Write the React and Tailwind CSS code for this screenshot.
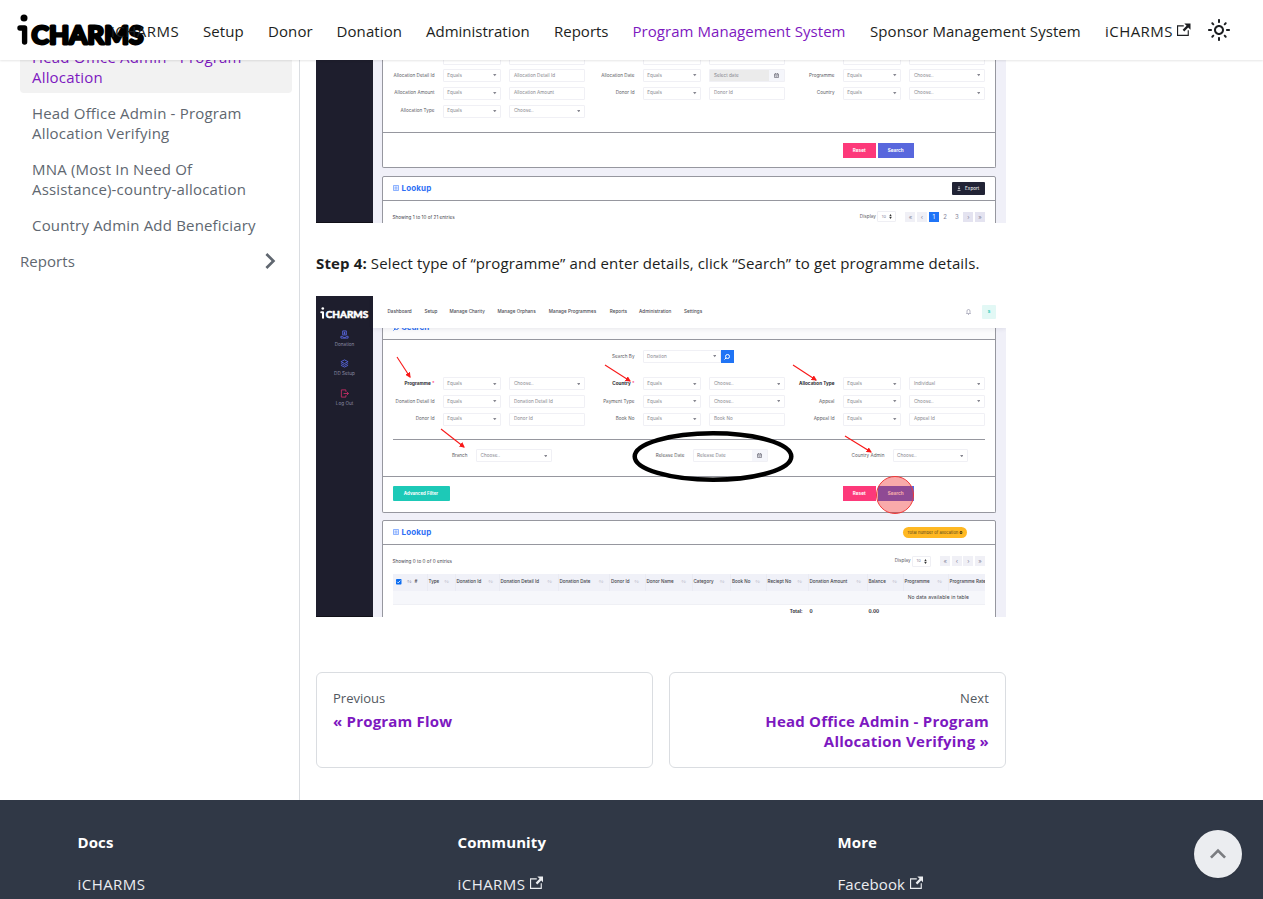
import React from "react";

const EXTERNAL =
  "M21 13v10h-21v-19h12v2h-10v15h17v-8h2zm3-12h-10.988l4.035 4-6.977 7.07 2.828 2.828 6.977-7.07 4.125 4.172v-11z";
const CHEVRON = "M7.41 15.41L12 10.83l4.59 4.58L18 14l-6-6-6 6z";
const SUN =
  "M12,9c1.65,0,3,1.35,3,3s-1.35,3-3,3s-3-1.35-3-3S10.35,9,12,9 M12,7c-2.76,0-5,2.24-5,5s2.24,5,5,5s5-2.24,5-5 S14.76,7,12,7L12,7z M2,13l2,0c0.55,0,1-0.45,1-1s-0.45-1-1-1l-2,0c-0.55,0-1,0.45-1,1S1.45,13,2,13z M20,13l2,0c0.55,0,1-0.45,1-1 s-0.45-1-1-1l-2,0c-0.55,0-1,0.45-1,1S19.45,13,20,13z M11,2v2c0,0.55,0.45,1,1,1s1-0.45,1-1V2c0-0.55-0.45-1-1-1S11,1.45,11,2z M11,20v2c0,0.55,0.45,1,1,1s1-0.45,1-1v-2c0-0.55-0.45-1-1-1C11.45,19,11,19.45,11,20z M5.99,4.58c-0.39-0.39-1.03-0.39-1.41,0 c-0.39,0.39-0.39,1.03,0,1.41l1.06,1.06c0.39,0.39,1.03,0.39,1.41,0s0.39-1.03,0-1.41L5.99,4.58z M18.36,16.95 c-0.39-0.39-1.03-0.39-1.41,0c-0.39,0.39-0.39,1.03,0,1.41l1.06,1.06c0.39,0.39,1.03,0.39,1.41,0c0.39-0.39,0.39-1.03,0-1.41 L18.36,16.95z M19.42,5.99c0.39-0.39,0.39-1.03,0-1.41c-0.39-0.39-1.03-0.39-1.41,0l-1.06,1.06c-0.39,0.39-0.39,1.03,0,1.41 s1.03,0.39,1.41,0L19.42,5.99z M7.05,18.36c0.39-0.39,0.39-1.03,0-1.41c-0.39-0.39-1.03-0.39-1.41,0l-1.06,1.06 c-0.39,0.39-0.39,1.03,0,1.41s1.03,0.39,1.41,0L7.05,18.36z";

function External({ className = "" }) {
  return (
    <svg viewBox="0 0 24 24" className={`h-[13.5px] w-[13.5px] shrink-0 fill-current ${className}`}>
      <path d={EXTERNAL} />
    </svg>
  );
}

function Logo({ className, weight = 1.6 }) {
  return (
    <svg viewBox="0 0 128 32" className={className} fill="currentColor" stroke="currentColor">
      <circle cx="7" cy="3.9" r="3.5" stroke="none" />
      <path d="M3 14H7.6V28" fill="none" strokeWidth="5.4" strokeLinecap="round" strokeLinejoin="round" />
      <text
        x="14.5" y="30" fontFamily="Lato, sans-serif" fontWeight="700" fontSize="25.5"
        strokeWidth={weight} strokeLinejoin="round" textLength="112" lengthAdjust="spacingAndGlyphs"
      >
        CHARMS
      </text>
    </svg>
  );
}

const NAV = [
  ["iCHARMS", "w-[92px] tracking-[0.5px]"],
  ["Setup", "w-[65px] tracking-[0.1px]"],
  ["Donor", "w-[68.5px] tracking-[0.1px]"],
  ["Donation", "w-[89.5px] tracking-[0.1px]"],
  ["Administration", "w-[128px]"],
  ["Reports", "w-[78.5px]"],
  ["Program Management System", "w-[237.5px] tracking-[0.05px]"],
  ["Sponsor Management System", "w-[235px] tracking-[0.07px]"],
];

function Header() {
  return (
    <header className="relative z-10 flex h-[60px] shrink-0 items-center bg-white pl-[17px] shadow-[0_1px_2px_0_rgba(0,0,0,0.1)]">
      <Logo weight={2.8} className="mr-[-46px] h-8 w-32 shrink-0" />
      <nav className="flex items-center pt-[3px] text-[15px] text-[#1c1e21]">
        {NAV.map(([label, width]) => (
          <a
            key={label}
            className={`${width} shrink-0 whitespace-nowrap px-3 ${label.startsWith("Program") ? "text-[#7d18c0]" : ""}`}
          >
            {label}
          </a>
        ))}
        <a className="flex w-[98px] shrink-0 items-center whitespace-nowrap pl-3 tracking-[0.45px]">
          iCHARMS <External className="mb-1 ml-[4.5px]" />
        </a>
      </nav>
      <svg viewBox="0 0 24 24" className="ml-[16px] h-6 w-6 shrink-0 fill-[#1c1e21]">
        <path d={SUN} />
      </svg>
    </header>
  );
}

function Sidebar() {
  return (
    <aside className="flex w-[300px] shrink-0 flex-col gap-1 border-r border-[#dadde1] pl-2 pr-[7px] text-[15px] leading-5 tracking-[0.18px] text-[#606770]">
      <div className="-mt-[19px] ml-3 rounded bg-[#f2f2f2] px-3 py-1.5 text-[#7d18c0]">
        Head Office Admin - Program<br />Allocation
      </div>
      <div className="ml-3 px-3 py-1.5">Head Office Admin - Program<br />Allocation Verifying</div>
      <div className="ml-3 whitespace-nowrap px-3 py-1.5">MNA (Most In Need Of<br />Assistance)-country-allocation</div>
      <div className="ml-3 whitespace-nowrap px-3 py-1.5">Country Admin Add Beneficiary</div>
      <div className="flex h-8 items-center justify-between pl-3 pr-1.5 tracking-[0.05px]">
        Reports
        <svg viewBox="0 0 24 24" className="h-8 w-8 rotate-90 fill-[#606770]"><path d={CHEVRON} /></svg>
      </div>
    </aside>
  );
}

/* ---------- Miniature application screens ---------- */

function Box({ w, text, arrow, date, gray }) {
  return (
    <div className={`${w} flex h-[13px] shrink-0 items-center justify-between rounded-[1px] border border-[#f0f0f5] pl-[3.5px] text-[#85858d] ${gray ? "bg-[#ebebeb]" : "bg-white"}`}>
      <span>{text}</span>
      {arrow && <svg viewBox="0 0 4 3" className="mr-[3.5px] h-[2.5px] w-[3.5px] fill-[#85858f]"><path d="M0 0H4L2 2.8z" /></svg>}
      {date && <Calendar />}
    </div>
  );
}

function Calendar() {
  return (
    <div className="flex h-full w-[15px] items-center justify-center bg-[#f5f6fb]">
      <svg viewBox="0 0 10 10" className="h-[5px] w-[5px]" fill="none" stroke="#70707c" strokeWidth="1.4">
        <path d="M1 2h8v7H1zM1 4h8M3 0v2M7 0v2M3 6.5h4" />
      </svg>
    </div>
  );
}

function Group({ label, req, bold, value, arrow, date }) {
  return (
    <div className="flex w-[200px] shrink-0 items-center gap-[8.3px]">
      <div className={`w-[50px] shrink-0 whitespace-nowrap text-right ${bold ? "font-bold text-[#26262e]" : "text-[#5a5a62]"}`}>
        {label}{req && <span className="text-[#fd397a]"> *</span>}
      </div>
      <Box w="w-[58.4px]" text="Equals" arrow />
      <Box w="w-[75.5px]" text={value} arrow={arrow} date={date} gray={date} />
    </div>
  );
}

function Row({ groups }) {
  return (
    <div className="flex h-[17.7px] items-center pl-[1.5px]">
      {groups.map((g) => <Group key={g.label} {...g} />)}
    </div>
  );
}

const CHOOSE = { value: "Choose..", arrow: true };

const ROWS_A = [
  [{ label: "Allocation Id", value: "Allocation Id" }, { label: "Donation Id", value: "Donation Id" }, { label: "Appeal", value: "" }],
  [{ label: "Allocation Detail Id", value: "Allocation Detail Id" }, { label: "Allocation Date", value: "Select date", date: true }, { label: "Programme", ...CHOOSE }],
  [{ label: "Allocation Amount", value: "Allocation Amount" }, { label: "Donor Id", value: "Donor Id" }, { label: "Country", ...CHOOSE }],
  [{ label: "Allocation Type", ...CHOOSE }],
];

const ROWS_B = [
  [{ label: "Programme", bold: true, req: true, ...CHOOSE }, { label: "Country", bold: true, req: true, ...CHOOSE }, { label: "Allocation Type", bold: true, value: "Individual", arrow: true }],
  [{ label: "Donation Detail Id", value: "Donation Detail Id" }, { label: "Payment Type", ...CHOOSE }, { label: "Appeal", ...CHOOSE }],
  [{ label: "Donor Id", value: "Donor Id" }, { label: "Book No", value: "Book No" }, { label: "Appeal Id", value: "Appeal Id" }],
];

function Buttons() {
  return (
    <div className="flex gap-[1.5px] text-center font-bold leading-[15px] text-white">
      <div className="h-[15px] w-[33.5px] bg-[#fd397a]">Reset</div>
      <div className="h-[15px] w-[36.5px] bg-[#5867dd]">Search</div>
    </div>
  );
}

function LookupTitle() {
  return (
    <div className="flex items-center gap-[3px] pb-px text-[8px] font-bold text-[#2d70f5]">
      <svg viewBox="0 0 12 12" className="h-[6px] w-[6px]" fill="none" stroke="#5d92ff" strokeWidth="1.4">
        <path d="M1 1h10v10H1zM3 4h6M3 6h6M3 8.2h6" />
      </svg>
      <span className="tracking-[0.15px]">Lookup</span>
    </div>
  );
}

function Pager({ active }) {
  const items = active ? ["«", "‹", "1", "2", "3", "›", "»"] : ["«", "‹", "›", "»"];
  return (
    <div className="flex items-center text-[#85859a]">
      <span className="text-[#5a5a62]">Display</span>
      <div className="ml-[1.5px] flex h-[11px] w-[19px] items-center justify-center gap-[3px] rounded-[1px] border border-[#efeff4] text-[4px]">
        10
        <svg viewBox="0 0 4 8" className="h-[5px] w-[3px] fill-[#333]"><path d="M2 0L4 3.4H0zM0 4.6H4L2 8z" /></svg>
      </div>
      <div className="ml-[9px] flex gap-[1.6px]">
        {items.map((t) => (
          <div
            key={t}
            className={`h-[10px] w-[10px] text-center text-[6px] leading-[9px] ${
              t === "1" ? "bg-[#1f74f7] text-[5px] text-white" : t === "2" || t === "3" ? "text-[5px]" : active && (t === "›" || t === "»") ? "bg-[#e4e3f0]" : "bg-[#f0f0f6]"
            }`}
          >
            {t}
          </div>
        ))}
      </div>
    </div>
  );
}

function Shot({ className, side, children }) {
  return (
    <div className={`${className} relative flex w-[690px] shrink-0 overflow-hidden bg-[#f0f0f8] font-['Inter',sans-serif] text-[4.6px] leading-[6px] tracking-[0.03px]`}>
      <div className="flex w-[57px] shrink-0 flex-col items-center border-b border-[#111018] bg-[#1e1e2d] text-[#8d8da6]">{side}</div>
      <div className="flex w-[633px] shrink-0 flex-col">{children}</div>
    </div>
  );
}

const CARD = "ml-[9px] w-[614px] shrink-0 border border-[#96979f] bg-white";

function AllocationShot() {
  return (
    <Shot className="h-[163px]">
      <div className={`${CARD} h-[108px] rounded-b-[2px] border-t-0`}>
        <div className="-mt-[10.8px] h-[83.8px] border-b border-[#96979f]">
          {ROWS_A.map((r, i) => <Row key={i} groups={r} />)}
        </div>
        <div className="pl-[459.5px] pt-[10px]"><Buttons /></div>
      </div>
      <div className={`${CARD} mt-[8px] h-[60px] rounded-t-[2px]`}>
        <div className="flex h-[24px] items-center justify-between border-b border-[#96979f] pl-[9.5px] pr-[10px]">
          <LookupTitle />
          <div className="flex h-[13.5px] w-[33.5px] items-center justify-center gap-[4px] rounded-[1px] bg-[#212335] text-white">
            <svg viewBox="0 0 8 10" className="h-[5px] w-[4px]" fill="none" stroke="white" strokeWidth="1.2"><path d="M4 0v6M2 4l2 2.4L6 4M1 9h6" /></svg>
            Export
          </div>
        </div>
        <div className="flex justify-between pl-[9.5px] pr-[10px] pt-[10px]">
          <div className="pt-[4px] text-[4.6px] text-[#44444c]">Showing 1 to 10 of 21 entries</div>
          <Pager active />
        </div>
      </div>
    </Shot>
  );
}

const MENU = [
  ["Dashboard", "w-[37px]"],
  ["Setup", "w-[25px]"],
  ["Manage Charity", "w-[48px]"],
  ["Manage Orphans", "w-[51.3px]"],
  ["Manage Programmes", "w-[61px]"],
  ["Reports", "w-[29.3px]"],
  ["Administration", "w-[45px]"],
  ["Settings", "w-[30px]"],
];

const COLUMNS = [
  ["#", "w-[14px]"],
  ["Type", "w-[28px]"],
  ["Donation Id", "w-[44px]"],
  ["Donation Detail Id", "w-[59px]"],
  ["Donation Date", "w-[51.5px]"],
  ["Donor Id", "w-[35.5px]"],
  ["Donor Name", "w-[47px]"],
  ["Category", "w-[38.5px]"],
  ["Book No", "w-[35.5px]"],
  ["Reciept No", "w-[42px]"],
  ["Donation Amount", "w-[59px]"],
  ["Balance", "w-[36px]"],
  ["Programme", "w-[45px]"],
  ["Programme Rate", "w-[60px]"],
];

function SideItem({ color, label, path }) {
  return (
    <div className="flex h-[29.2px] flex-col items-center gap-[3px]">
      <svg viewBox="0 0 20 20" className="h-[9px] w-[9px]" fill="none" stroke={color} strokeWidth="2" strokeLinejoin="round">
        <path d={path} />
      </svg>
      <span>{label}</span>
    </div>
  );
}

function Annotations() {
  const arrows = [[81, 61, 94, 81], [289, 69, 314, 85], [477, 69, 500, 84], [125, 133, 148, 151], [529, 140, 555, 156]];
  return (
    <svg viewBox="0 0 690 321" className="absolute inset-0 h-[321px] w-[690px]">
      <defs>
        <marker id="tip" markerWidth="5" markerHeight="5" refX="4" refY="2.5" orient="auto"><path d="M0 0L5 2.5L0 5z" fill="#f81818" /></marker>
      </defs>
      {arrows.map(([x1, y1, x2, y2]) => (
        <line key={x1} x1={x1} y1={y1} x2={x2} y2={y2} stroke="#f81818" strokeWidth="1.1" markerEnd="url(#tip)" />
      ))}
      <ellipse cx="397" cy="160.5" rx="78.3" ry="23.2" fill="none" stroke="#000" strokeWidth="4.5" />
      <circle cx="579" cy="199" r="18.5" fill="#f01818" fillOpacity="0.37" stroke="#f03838" strokeWidth="1" />
    </svg>
  );
}

function SearchShot() {
  const side = (
    <>
      <Logo className="mb-[11.5px] mt-[10.5px] h-[12.2px] w-[49px] text-white" />
      <SideItem color="#5867dd" label="Donation" path="M6 2h8v9H6zM2 14h4l2 3h4l2-3h4v4H2zM10 4v6M8 7h4" />
      <SideItem color="#5867dd" label="DD Setup" path="M10 2L18 6L10 10L2 6zM2 10l8 4 8-4M2 14l8 4 8-4" />
      <SideItem color="#c72c64" label="Log Out" path="M13 6V2H3v16h10v-4M8 10h11M15 6l4 4-4 4" />
    </>
  );
  return (
    <Shot className="h-[321px]" side={side}>
      <div className="relative z-10 flex h-[32px] shrink-0 items-center bg-white pl-[14.5px] pt-[0.5px] text-[#494951] shadow-[0_1px_4px_rgba(60,60,90,0.1)]">
        {MENU.map(([m, w]) => <span key={m} className={`${w} shrink-0 whitespace-nowrap font-medium`}>{m}</span>)}
        <svg viewBox="0 0 10 12" className="ml-[252px] h-[6px] w-[5px]" fill="none" stroke="#8888a0" strokeWidth="1.2"><path d="M1 9h8L8 7V4a3 3 0 0 0-6 0v3zM4 11h2" /></svg>
        <div className="ml-[11px] h-[14px] w-[14px] rounded-[1px] bg-[#e2f8f5] text-center font-bold leading-[14px] text-[#1dc9b7]">s</div>
      </div>
      <div className={`${CARD} h-[184.5px] rounded-b-[2px] border-t-0`}>
        <div className="flex h-[12px] items-start gap-[3px] overflow-hidden border-b border-[#96979f] bg-[#fbfbfc] pl-[9.5px] text-[8px] font-bold text-[#2d70f5]">
          <svg viewBox="0 0 12 12" className="-mt-[3px] h-[6px] w-[6px]" fill="none" stroke="#2d70f5" strokeWidth="2"><circle cx="7" cy="5" r="4" /><path d="M4 8l-3 3" /></svg>
          <span className="-mt-[5px] leading-[8px]">Search</span>
        </div>
        <div className="flex items-center pl-[201.5px] pt-[10px]">
          <span className="w-[50px] text-right text-[#5a5a62]">Search By</span>
          <div className="w-[8px]" />
          <Box w="w-[78px]" text="Donation" arrow />
          <div className="flex h-[13px] w-[13.5px] items-center justify-center bg-[#2074f5]">
            <svg viewBox="0 0 12 12" className="h-[6px] w-[6px]" fill="none" stroke="white" strokeWidth="2"><circle cx="7" cy="5" r="4" /><path d="M4 8l-3 3" /></svg>
          </div>
        </div>
        <div className="pt-[12px]">{ROWS_B.map((r, i) => <Row key={i} groups={r} />)}</div>
        <div className="ml-[9.5px] mt-[10.9px] w-[592px] border-t border-[#96979f]" />
        <div className="flex h-[37px] items-center border-b border-[#96979f] pb-[4.4px] text-[#5a5a62]">
          <span className="w-[84.5px] text-right">Branch</span>
          <div className="w-[8.5px]" />
          <Box w="w-[75.5px]" text="Choose.." arrow />
          <span className="w-[133px] text-right">Release Date</span>
          <div className="w-[8px]" />
          <Box w="w-[75px]" text="Release Date" date />
          <span className="w-[117px] text-right">Country Admin</span>
          <div className="w-[8px]" />
          <Box w="w-[75px]" text="Choose.." arrow />
        </div>
        <div className="flex pl-[9.5px] pt-[9.5px]">
          <div className="mr-[393px] h-[15px] w-[57px] rounded-[1px] bg-[#1dc9b7] text-center text-[4.4px] font-bold leading-[15px] text-white">Advanced Filter</div>
          <Buttons />
        </div>
      </div>
      <div className={`${CARD} mt-[7.5px] h-[110px] rounded-t-[2px] pl-[9.5px] pr-[10px]`}>
        <div className="-ml-[9.5px] -mr-[10px] flex h-[24px] items-center justify-between border-b border-[#96979f] pl-[9.5px] pr-[28px]">
          <LookupTitle />
          <div className="h-[11px] w-[64.5px] rounded-full bg-[#ffb822] text-center text-[4.1px] leading-[11px] text-[#574520]">Total number of allocation <b className="text-black">0</b></div>
        </div>
        <div className="flex h-[28.5px] items-start justify-between pt-[10.5px]">
          <div className="pt-[3.5px] text-[4.6px] text-[#44444c]">Showing 0 to 0 of 0 entries</div>
          <Pager />
        </div>
        <div className="overflow-hidden">
          <div className="flex h-[17px] items-center bg-[#f0f1f8] text-[4.5px] text-[#3d3d45]">
            <div className="flex w-[21px] shrink-0 items-center gap-[5px] pl-[3.5px]">
              <svg viewBox="0 0 10 10" className="h-[5.5px] w-[5.5px]"><rect width="10" height="10" rx="1.5" fill="#0b6cf0" /><path d="M2 5l2 2 4-4" stroke="white" strokeWidth="1.5" fill="none" /></svg>
              <span className="text-[4px] tracking-[-1px] text-[#85859a]">↑↓</span>
            </div>
            {COLUMNS.map(([c, w]) => (
              <div key={c} className={`${w} flex h-full shrink-0 items-center justify-between whitespace-nowrap border-r border-[#eaebf3] pl-[4px] pr-[6px] font-medium`}>
                <span className="-ml-[3px]">{c}</span>{c !== "#" && <span className="text-[4px] tracking-[-1px] text-[#c3c3d0]">↑↓</span>}
              </div>
            ))}
          </div>
          <div className="h-[14px] border-b border-[#eff0f5] bg-[#f6f7fb] pr-[16px] text-right text-[5px] leading-[13px] tracking-[0.08px] text-[#3d3d45]">No data available in table</div>
          <div className="flex h-[14px] items-center font-bold text-[#2c2c34]">
            <span className="w-[410px] text-right">Total:</span>
            <span className="w-[66px] pl-[7px]">0</span>
            <span>0.00</span>
          </div>
        </div>
      </div>
      <Annotations />
    </Shot>
  );
}

function Footer() {
  const cols = [["Docs", "iCHARMS", false], ["Community", "iCHARMS", true], ["More", "Facebook", true]];
  return (
    <footer className="relative flex h-[99px] shrink-0 bg-[#303846] pl-[77.5px] text-[15px] text-[#ebedf0]">
      {cols.map(([title, link, ext]) => (
        <div key={title} className="w-[380px] shrink-0 pt-[30px]">
          <div className="mb-[17px] font-bold leading-[25px] tracking-[0.1px] text-white">{title}</div>
          <div className="flex items-center leading-6">
            <span className={link === "iCHARMS" ? "tracking-[0.45px]" : "tracking-[0.1px]"}>{link}</span>
            {ext && <External className="mb-0.5 ml-[4.5px]" />}
          </div>
        </div>
      ))}
      <button className="absolute right-[21px] top-[30px] flex h-12 w-12 items-center justify-center rounded-full bg-[#ebedf0] shadow-[0_1px_2px_0_rgba(0,0,0,0.1)]">
        <svg viewBox="0 0 24 24" className="h-8 w-8 fill-[#7a7c80]"><path d={CHEVRON} /></svg>
      </button>
    </footer>
  );
}

export default function App() {
  return (
    <div className="flex h-[899px] w-[1263px] flex-col overflow-hidden bg-white font-['Open_Sans',sans-serif]">
      <Header />
      <div className="flex h-[740px] shrink-0 overflow-hidden">
        <Sidebar />
        <main className="flex w-[706px] flex-col pl-4">
          <AllocationShot />
          <p className="flex h-[73px] items-center pt-[7px] text-[15px] tracking-[0.13px] text-[#1c1e21]">
            <span className="whitespace-nowrap"><b>Step 4:</b> Select type of “programme” and enter details, click “Search” to get programme details.</span>
          </p>
          <SearchShot />
          <div className="mt-[55px] flex gap-4 leading-5">
            <div className="h-24 w-[337px] rounded-md border border-[#dadde1] p-4">
              <div className="text-[13px] leading-[19px] text-[#525860]">Previous</div>
              <div className="mt-[3px] text-[15px] font-bold tracking-[0.2px] text-[#7d18c0]">« Program Flow</div>
            </div>
            <div className="h-24 w-[337px] rounded-md border border-[#dadde1] p-4 text-right">
              <div className="text-[13px] leading-[19px] tracking-[0.1px] text-[#525860]">Next</div>
              <div className="mt-[3px] text-[15px] font-bold tracking-[0.23px] text-[#7d18c0]">Head Office Admin - Program<br />Allocation Verifying »</div>
            </div>
          </div>
        </main>
      </div>
      <Footer />
    </div>
  );
}
